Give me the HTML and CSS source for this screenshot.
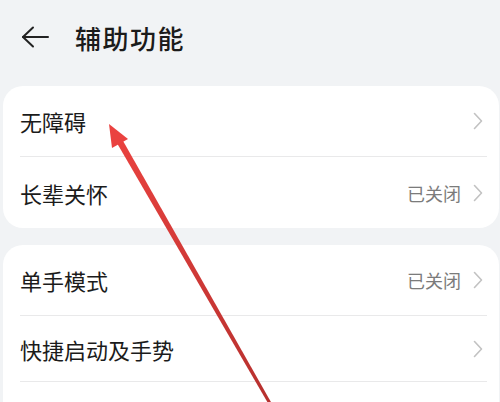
FILE: index.html
```html
<!DOCTYPE html>
<html lang="zh-CN">
<head>
    <meta charset="UTF-8">
    <meta name="viewport" content="width=device-width, initial-scale=1.0">
    <title>辅助功能</title>
    <link rel="stylesheet" href="styles.css">
</head>
<body>
    <div class="page">
        <div class="header">
            <svg class="back" width="28" height="22" viewBox="0 0 28 22">
                <line x1="2" y1="11" x2="27" y2="11"></line>
                <polyline points="12,1.5 2,11 12,20.5"></polyline>
            </svg>
            <h1>辅助功能</h1>
        </div>

        <div class="card">
            <div class="row">
                <span class="label">无障碍</span>
                <svg class="chev" width="10" height="18" viewBox="0 0 10 18"><polyline points="1.5,1.5 8.5,9 1.5,16.5"></polyline></svg>
            </div>
            <div class="row">
                <span class="label">长辈关怀</span>
                <span class="value">已关闭</span>
                <svg class="chev" width="10" height="18" viewBox="0 0 10 18"><polyline points="1.5,1.5 8.5,9 1.5,16.5"></polyline></svg>
            </div>
        </div>

        <div class="card">
            <div class="row">
                <span class="label">单手模式</span>
                <span class="value">已关闭</span>
                <svg class="chev" width="10" height="18" viewBox="0 0 10 18"><polyline points="1.5,1.5 8.5,9 1.5,16.5"></polyline></svg>
            </div>
            <div class="row row-short">
                <span class="label">快捷启动及手势</span>
                <svg class="chev" width="10" height="18" viewBox="0 0 10 18"><polyline points="1.5,1.5 8.5,9 1.5,16.5"></polyline></svg>
            </div>
            <div class="row">
                <span class="label">定时开关机</span>
                <svg class="chev" width="10" height="18" viewBox="0 0 10 18"><polyline points="1.5,1.5 8.5,9 1.5,16.5"></polyline></svg>
            </div>
        </div>

        <!-- red annotation arrow -->
        <svg class="pointer" width="500" height="402" viewBox="0 0 500 402">
            <defs>
                <linearGradient id="arrowFill" x1="109" y1="124" x2="270" y2="402" gradientUnits="userSpaceOnUse">
                    <stop offset="0" stop-color="#ec4340"></stop>
                    <stop offset="1" stop-color="#b6302e"></stop>
                </linearGradient>
            </defs>
            <polygon points="117.2,143.5 122.8,140.5 271.5,403 268.5,404" fill="url(#arrowFill)"></polygon>
            <polygon points="109,124 128,139 112,148" fill="#ea4240"></polygon>
        </svg>
    </div>
</body>
</html>
```

FILE: styles.css
```css
body {
    margin: 0;
    background: #f1f3f5;
    font-family: "Noto Sans CJK SC", "Noto Sans", sans-serif;
    color: #1b1b1b;
}
.page {
    position: relative;
    width: 500px;
    height: 402px;
    overflow: hidden;
}
.header {
    display: flex;
    align-items: center;
    height: 74px;
    padding-left: 21px;
    margin-bottom: 12px;
}
.back {
    fill: none;
    stroke: #222;
    stroke-width: 2;
    stroke-linecap: round;
    stroke-linejoin: round;
}
.header h1 {
    margin: 0 0 0 26px;
    font-size: 26px;
    font-weight: 500;
    letter-spacing: 1.5px;
}
.card {
    background: #fff;
    border-radius: 20px;
    margin: 0 1px 17px 3px;
    padding: 0 12px 0 17px;
}
.row {
    display: flex;
    align-items: center;
    height: 70px;
    padding-right: 4px;
    border-bottom: 1px solid #e9e9ea;
}
.row-short {
    height: 65px;
}
.row:last-child {
    border-bottom: none;
    height: 71px;
}
.label {
    flex: 1;
    font-size: 22px;
    font-weight: 400;
}
.value {
    font-size: 18px;
    color: #7b7b7b;
    margin-right: 12px;
}
.chev {
    fill: none;
    stroke: #c2c2c2;
    stroke-width: 1.6;
    stroke-linecap: round;
    stroke-linejoin: round;
}
.pointer {
    position: absolute;
    left: 0;
    top: 0;
    pointer-events: none;
}
```
